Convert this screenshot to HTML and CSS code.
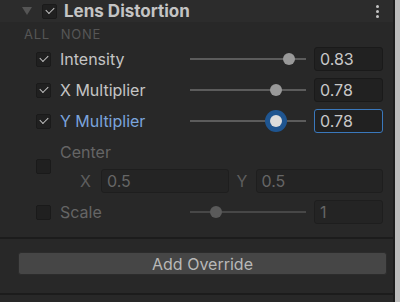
FILE: index.html
```html
<!DOCTYPE html>
<html lang="en">
<head>
    <meta charset="UTF-8">
    <title>Lens Distortion</title>
    <link rel="stylesheet" href="styles.css">
</head>
<body>
    <div class="panel">
        <div class="header">
            <span class="foldout"></span>
            <span class="check on"></span>
            <span class="title">Lens Distortion</span>
            <span class="menu"><i></i><i></i><i></i></span>
        </div>

        <div class="toggles">
            <span>ALL</span>
            <span>NONE</span>
        </div>

        <div class="props">
            <div class="row">
                <span class="check on"></span>
                <span class="label">Intensity</span>
                <div class="slider"><span class="thumb" style="left: 99px"></span></div>
                <div class="field">0.83</div>
            </div>
            <div class="row">
                <span class="check on"></span>
                <span class="label">X Multiplier</span>
                <div class="slider"><span class="thumb" style="left: 86px"></span></div>
                <div class="field">0.78</div>
            </div>
            <div class="row">
                <span class="check on"></span>
                <span class="label active">Y Multiplier</span>
                <div class="slider"><span class="thumb focus" style="left: 86px"></span></div>
                <div class="field focus">0.78</div>
            </div>
            <div class="group">
                <span class="check"></span>
                <div class="groupBody">
                    <span class="label off">Center</span>
                    <div class="xy">
                        <span class="axis">X</span>
                        <div class="field off">0.5</div>
                        <span class="axis y">Y</span>
                        <div class="field off">0.5</div>
                    </div>
                </div>
            </div>
            <div class="row">
                <span class="check"></span>
                <span class="label off">Scale</span>
                <div class="slider off"><span class="thumb" style="left: 26px"></span></div>
                <div class="field off">1</div>
            </div>
        </div>

        <div class="footer">
            <button class="addBtn">Add Override</button>
        </div>
    </div>
    <div class="edge"></div>
</body>
</html>
```

FILE: styles.css
```css
body {
    margin: 0;
    width: 400px;
    height: 302px;
    display: flex;
    background-color: #282828;
    font-family: Inter, "Noto Sans", sans-serif;
    color: #c4c4c4;
    overflow: hidden;
}

.panel {
    flex: 1;
    display: flex;
    flex-direction: column;
    border-right: 2px solid #1c1c1c;
}

.edge {
    width: 5px;
    background-color: #bdbdbd;
}

.header {
    height: 22px;
    display: flex;
    align-items: center;
    background-color: #2c2c2c;
    padding-left: 22px;
    padding-right: 14px;
}

.foldout {
    width: 0;
    height: 0;
    border-left: 5px solid transparent;
    border-right: 5px solid transparent;
    border-top: 8px solid #555555;
    margin-right: 10px;
}

.check {
    width: 13px;
    height: 13px;
    flex-shrink: 0;
    background-color: #202020;
    border: 1px solid #1a1a1a;
    border-radius: 2px;
    position: relative;
}

.check.on::after {
    content: "";
    position: absolute;
    left: 3px;
    top: 2px;
    width: 7px;
    height: 4px;
    border-left: 1.5px solid #c4c4c4;
    border-bottom: 1.5px solid #c4c4c4;
    transform: rotate(-45deg);
}

.title {
    flex: 1;
    margin-left: 7px;
    font-size: 17px;
    font-weight: 700;
    color: #c4c4c4;
}

.menu {
    display: flex;
    flex-direction: column;
    gap: 2px;
}

.menu i {
    width: 3px;
    height: 3px;
    border-radius: 50%;
    background-color: #c4c4c4;
}

.toggles {
    height: 24px;
    display: flex;
    align-items: center;
    gap: 11px;
    padding-left: 24px;
    font-size: 13px;
    letter-spacing: 0.7px;
    color: #565656;
}

.props {
    display: flex;
    flex-direction: column;
    gap: 7px;
    padding: 1px 10px 0 36px;
}

.row {
    height: 24px;
    display: flex;
    align-items: center;
}

.label {
    flex: 1;
    margin-left: 9px;
    font-size: 16px;
    color: #c4c4c4;
}

.label.active {
    color: #7ba4dc;
}

.label.off {
    color: #656565;
}

.slider {
    width: 116px;
    height: 2px;
    background-color: #5c5c5c;
    position: relative;
}

.slider.off {
    background-color: #474747;
}

.thumb {
    position: absolute;
    top: 1px;
    width: 12px;
    height: 12px;
    margin: -6px 0 0 -6px;
    border-radius: 50%;
    background-color: #999999;
}

.slider.off .thumb {
    background-color: #5a5a5a;
}

.thumb.focus {
    background-color: #dcdcdc;
    box-shadow: 0 0 0 5px #1f5590;
}

.field {
    width: 69px;
    height: 24px;
    box-sizing: border-box;
    margin-left: 8px;
    padding-left: 5px;
    display: flex;
    align-items: center;
    background-color: #212121;
    border: 1px solid #1a1a1a;
    border-radius: 3px;
    font-size: 16px;
    color: #c8c8c8;
}

.field.focus {
    border-color: #3a78bc;
}

.field.off {
    background-color: #242424;
    border-color: #1e1e1e;
    color: #666666;
}

.group {
    display: flex;
    align-items: center;
}

.groupBody {
    flex: 1;
    display: flex;
    flex-direction: column;
    gap: 5px;
}

.groupBody .label {
    height: 24px;
    line-height: 24px;
}

.xy {
    height: 24px;
    display: flex;
    align-items: center;
    padding-left: 29px;
}

.axis {
    width: 21px;
    font-size: 16px;
    color: #5e5e5e;
}

.axis.y {
    width: 19px;
    margin-left: 8px;
}

.xy .field {
    flex: 1;
    width: auto;
    margin-left: 0;
}

.footer {
    margin-top: 13px;
    border-top: 2px solid #1c1c1c;
    border-bottom: 2px solid #1c1c1c;
    height: 58px;
    display: flex;
    align-items: flex-start;
    padding: 13px 6px 0 18px;
    box-sizing: border-box;
}

.addBtn {
    flex: 1;
    height: 23px;
    background-color: #464646;
    border: 1px solid #2c2c2c;
    border-radius: 3px;
    font-family: Inter, "Noto Sans", sans-serif;
    font-size: 16px;
    color: #b8b8b8;
    padding: 0;
}
```
